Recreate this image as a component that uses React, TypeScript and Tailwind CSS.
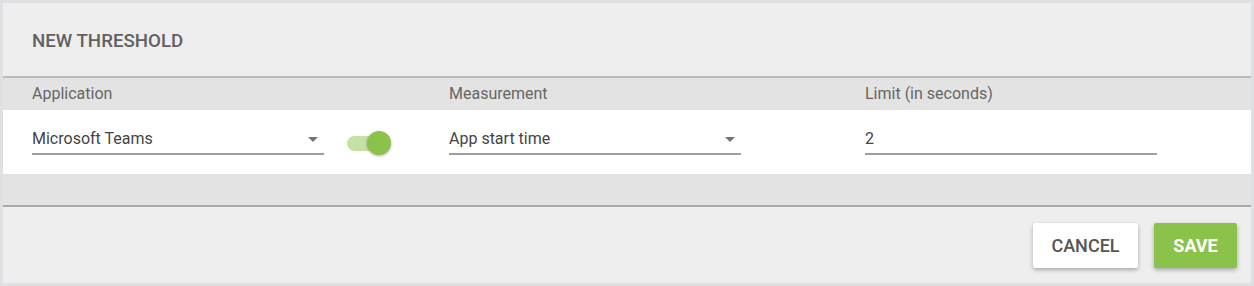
import React from 'react';

const Arrow: React.FC = () => (
  <svg width="10" height="5" viewBox="0 0 10 5" className="shrink-0 mt-[16px]">
    <path d="M0 0 L10 0 L5 5 Z" fill="#757575" />
  </svg>
);

const SelectField: React.FC<{ value: string }> = ({ value }) => (
  <div className="w-[292px] h-[45px] flex items-center justify-between border-b-2 border-[#9e9e9e] pr-[6px]">
    <span className="text-[16px] text-[#444444] mt-[14px]">{value}</span>
    <Arrow />
  </div>
);

const App: React.FC = () => {
  return (
    <div
      className="w-[1254px] h-[286px] border-[3px] border-[#dfe0e4] bg-[#eeeeee] flex flex-col"
      style={{ fontFamily: 'Roboto, "Liberation Sans", sans-serif' }}
    >
      <div className="h-[73px] px-[29px] flex items-center">
        <span className="text-[18.7px] font-medium text-[#616161] uppercase mt-[4px]">New Threshold</span>
      </div>
      <div className="h-[2px] bg-[#bababa]" />

      <div className="h-[32px] bg-[#e3e3e3] pl-[29px] grid grid-cols-[417px_416px_1fr] items-center">
        <span className="text-[16px] text-[#666666]">Application</span>
        <span className="text-[16px] text-[#666666]">Measurement</span>
        <span className="text-[16px] text-[#666666]">Limit (in seconds)</span>
      </div>

      <div className="h-[64px] bg-white pl-[29px] grid grid-cols-[417px_416px_1fr] items-start">
        <div className="flex items-center">
          <SelectField value="Microsoft Teams" />
          <div className="relative ml-[23px] w-[44px] h-[24px] mt-[21px] flex items-center">
            <div className="w-[34px] h-[15px] rounded-full bg-[#c5e1a5]" />
            <div className="absolute left-[20px] top-0 w-[24px] h-[24px] rounded-full bg-[#8bc34a] shadow-[0_1px_3px_rgba(0,0,0,0.3)]" />
          </div>
        </div>
        <div className="flex items-center">
          <SelectField value="App start time" />
        </div>
        <div className="flex items-center">
          <div className="w-[292px] h-[45px] flex items-center border-b-2 border-[#9e9e9e]">
            <span className="text-[16px] text-[#444444] mt-[14px]">2</span>
          </div>
        </div>
      </div>

      <div className="h-[31px] bg-[#e3e3e3]" />
      <div className="h-[2px] bg-[#a9a9a9]" />

      <div className="flex-1 flex justify-end items-start gap-4 pt-[16px] pr-[14px]">
        <button className="w-[105px] h-[45px] bg-white rounded-[2px] text-[18px] font-medium text-[#555555] shadow-[0_2px_4px_rgba(0,0,0,0.3)]">
          CANCEL
        </button>
        <button className="w-[83px] h-[45px] bg-[#8bc34a] rounded-[2px] text-[18px] font-bold text-white shadow-[0_2px_4px_rgba(0,0,0,0.3)]">
          SAVE
        </button>
      </div>
    </div>
  );
};

export default App;
